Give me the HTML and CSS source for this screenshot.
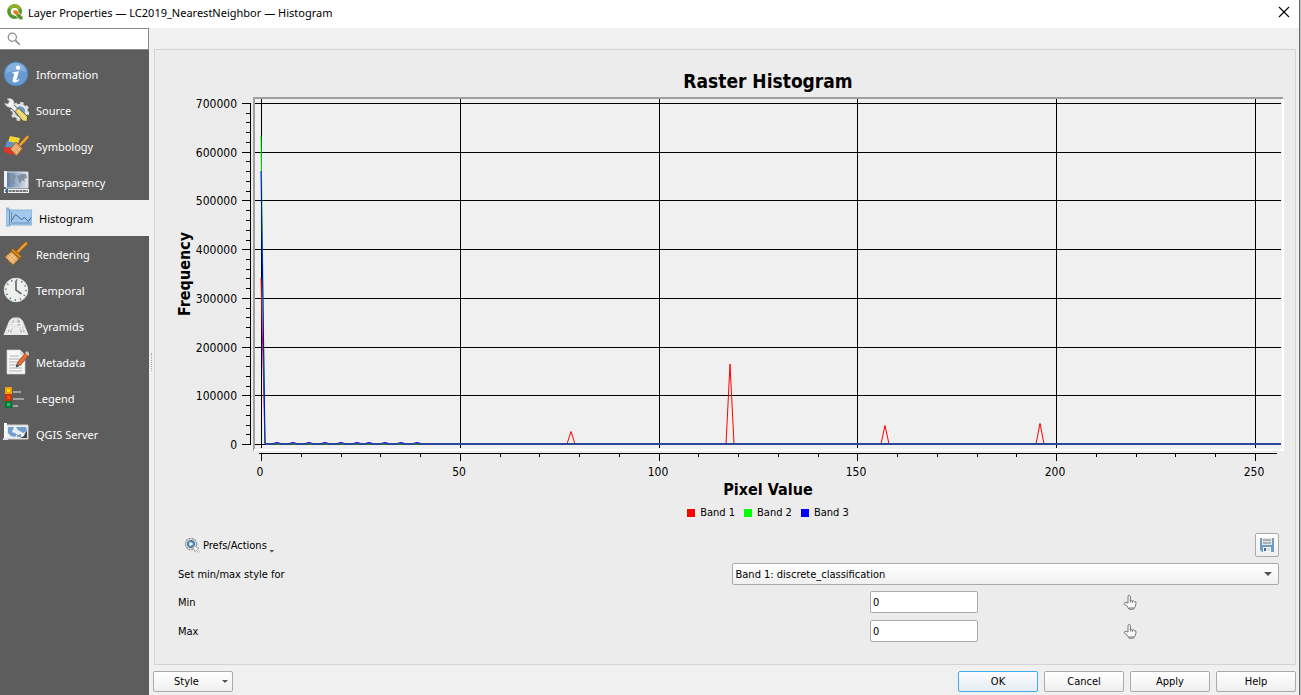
FILE: index.html
```html
<!DOCTYPE html>
<html lang="en">
<head>
<meta charset="utf-8">
<title>Layer Properties — LC2019_NearestNeighbor — Histogram</title>
<link rel="stylesheet" href="styles.css">
</head>
<body>
<div class="dialog">
  <header class="titlebar">
    <svg class="logo" viewBox="0 0 16 16" aria-hidden="true">
      <circle cx="7.6" cy="7.6" r="5.6" fill="none" stroke="#589632" stroke-width="3.6"/>
      <path d="M2.6 5A5.6 5.6 0 0 1 12.6 5" fill="none" stroke="#93b023" stroke-width="3.4"/>
      <path d="M8 8h3.4l4.3 4.4v3.3h-3.2L8 11.3z" fill="#fff"/>
      <path d="M9.4 9.4h2.6l3.6 3.4v2.8h-2.8L9.4 12z" fill="#589632"/>
      <path d="M6.3 6.3h3.2l1.8 1.8v2.6H8.6L6.3 8.8z" fill="#ee7913"/>
    </svg>
    <h1 class="caption">Layer Properties — LC2019_NearestNeighbor — Histogram</h1>
    <button class="close" type="button" aria-label="Close">
      <svg viewBox="0 0 12 12"><path d="M1 1l10 10M11 1L1 11" stroke="#000" stroke-width="1.1"/></svg>
    </button>
  </header>

  <div class="body">
    <aside class="sidebar">
      <label class="search">
        <svg viewBox="0 0 14 14" aria-hidden="true"><circle cx="5.3" cy="5.3" r="4.1" fill="none" stroke="#8a8a8a" stroke-width="1.2"/><path d="M8.4 8.4l4.4 4.4" stroke="#8a8a8a" stroke-width="1.5"/></svg>
        <input type="text" aria-label="Search">
      </label>
      <nav class="pages">
        <a href="#information"><svg viewBox="0 0 26 26"><circle cx="13" cy="13" r="12" fill="#6a9bd0" stroke="#4a79b0"/><path d="M3 12a10 10 0 0 1 20-1q-9-3-20 1z" fill="#86afdb"/><circle cx="15" cy="6.6" r="2.2" fill="#fff"/><path d="M9.500 11.200l6.500-1-2.700 9q.8.4 2.800-1.200l.4.9q-3 2.900-5.300 2.600-2.200-.5-1.400-3.500l1.500-5.400-2-.4z" fill="#fff"/></svg><span>Information</span></a>
        <a href="#source"><svg viewBox="0 0 26 26"><circle cx="17" cy="14.500" r="6.500" fill="#6a9bd0" stroke="#e4e4e4" stroke-width="2.500"/><circle cx="17" cy="14.500" r="8.400" fill="none" stroke="#e4e4e4" stroke-width="2.200" stroke-dasharray="3.300 3.297"/><path d="M8 8l9 9" stroke="#6a6a6a" stroke-width="5"/><path d="M1.500 6.500Q4 11 8.500 10.500 12.500 8 10.500 3.500 8 .5 4 2l2.500 2L5 7z" fill="#f1f1f1" stroke="#bbb" stroke-width=".5"/><path d="M8 8l7 7" stroke="#f1f1f1" stroke-width="3.200"/><path d="M12 14.500l3.500-3.500 9 8.500-.3 5-4.500-.5z" fill="#efd66c" stroke="#55502e" stroke-width=".9"/><path d="M15 13.500l8 8" stroke="#fff0a0"/></svg><span>Source</span></a>
        <a href="#symbology"><svg viewBox="0 0 26 26"><path d="M7 3l10 2-2 6-10-2z" fill="#f3d52f"/><path d="M4 8l9 2-2 5-9-1z" fill="#5c93cf"/><path d="M1 14l9 1 5 7-9-1-5-2z" fill="#e23328"/><path d="M17 12l7.500-8" stroke="#a86516" stroke-width="3.600" stroke-linecap="round"/><path d="M17 12l7.500-8" stroke="#eca544" stroke-width="2" stroke-linecap="round"/><path d="M13 9l6.500 6.500-6 7.500-6.500-7z" fill="#dfa162" stroke="#9d6223"/><path d="M11.500 12l5.500 6M9.500 14l5.500 6M14 12l-4 6M17 15l-4 5" stroke="#f2c795" stroke-width=".7"/></svg><span>Symbology</span></a>
        <a href="#transparency"><svg viewBox="0 0 26 26"><defs><linearGradient id="fade"><stop stop-color="#5779ae"/><stop offset="1" stop-color="#e4e7ea"/></linearGradient></defs><path d="M3 3h22v16H3z" fill="url(#fade)" stroke="#d6dbe2"/><path d="M6 8l5-3 2 3-2 3 1 4-2 1-2-4zM14 7l4-2h5l1 4-3 1 1 3-3-2-2 4-2-5z" fill="#8391a1"/><path d="M1 2h3v16H1z" fill="#f2f2f2"/><path d="M1 20h25v4H1z" fill="#f1f1f1"/><path d="M2 22h23" stroke="#4c4c4c" stroke-width="1.600" stroke-dasharray="3 .6"/><path d="M3 20h2v4H3z" fill="#3465a4"/></svg><span>Transparency</span></a>
        <a href="#histogram" class="current" aria-current="page"><svg viewBox="0 0 26 26"><path d="M1 5h25v15H4v1H0V3h3v2z" fill="#a3c8ea" stroke="#7ca9d4" stroke-width=".8"/><path d="M3.500 5v15M5.500 7v11h19" fill="none" stroke="#6b8fb5"/><path d="M5.500 15.500l4-6 6 5 3-2 4 4 2.500-4" fill="none" stroke="#3567a5"/></svg><span>Histogram</span></a>
        <a href="#rendering"><svg viewBox="0 0 26 26"><path d="M14.500 11l8.500-8.500" stroke="#9a5d12" stroke-width="4" stroke-linecap="round"/><path d="M14.500 11l8.500-8.500" stroke="#eba23c" stroke-width="2.200" stroke-linecap="round"/><path d="M10 7.500l8.500 8-1.500 2L8 9.500z" fill="#d98a21" stroke="#9a5d12"/><path d="M8.500 10.500l7.500 7-6 6.500L2 16z" fill="#e3ab65" stroke="#a36622"/><path d="M6.500 12l7.500 8M4.500 14l7 8M13 15l-6.500 6M11 13l-6 6" stroke="#f5d3a0" stroke-width=".8"/></svg><span>Rendering</span></a>
        <a href="#temporal"><svg viewBox="0 0 26 26"><circle cx="13" cy="13" r="11.800" fill="#efefec" stroke="#e2e2df"/><circle cx="13" cy="13" r="10" fill="none" stroke="#4e79ad" stroke-width="1.800" stroke-dasharray="1.200 4.036"/><path d="M13 3.500V13l5.500 4" fill="none" stroke="#6b7075" stroke-width="1.800"/></svg><span>Temporal</span></a>
        <a href="#pyramids"><svg viewBox="0 0 26 26"><path d="M9 5q4-1.500 8 0l3 3 5.500 14H.5L6 8z" fill="#e8e8e8"/><path d="M8 8l3-1-1 4-3 2zM14 6l4 2v4l-3 1zM16 15l4-1 2 5-4 1zM5 16l5-1-2 5-3-1z" fill="#bababa"/><path d="M7 10.500h12M4 16h18M9 6L6 22M17 6l3 16" stroke="#fafafa" stroke-width=".9"/><path d="M9 5q4-1.500 8 0" fill="none" stroke="#999"/></svg><span>Pyramids</span></a>
        <a href="#metadata"><svg viewBox="0 0 26 26"><path d="M4 1h13l5 5v19H4z" fill="#f8f8f8" stroke="#ccc" stroke-width=".7"/><path d="M17 1v5h5" fill="#ddd"/><path d="M7 7h9M6 10h13M6 13h11M6 16h10M6 19h13M6 22h13" stroke="#aeb0b2"/><path d="M15.500 15.500l9-11" stroke="#a9441d" stroke-width="4.600"/><path d="M16 15l8-10" stroke="#e6743a" stroke-width="3"/><path d="M22 4l4 3 1.500-1.500L24 2z" fill="#c9c9c9"/><path d="M13.500 14.500l-.7 4 4-1.500z" fill="#484848"/></svg><span>Metadata</span></a>
        <a href="#legend"><svg viewBox="0 0 26 26"><path d="M3 3h5v5H3z" fill="#ffdd0b" stroke="#f39c12" stroke-width="2"/><path d="M3 10h5v5H3z" fill="#ff4b0a" stroke="#c23a0a" stroke-width="2"/><path d="M3 17h5v5H3z" fill="#15c765" stroke="#07773c" stroke-width="2"/><path d="M10 7h8M10 14h11M10 21h5" stroke="#a2a2a2" stroke-width="2"/></svg><span>Legend</span></a>
        <a href="#server"><svg viewBox="0 0 26 26"><path d="M3 4h22v14H3z" fill="#eceeee" stroke="#cfd1d2"/><path d="M1 2h3v17H1z" fill="#f8f8f8"/><path d="M0 17h5v2H0z" fill="#e1e1e1"/><path d="M5 6h6l-2 5 5 2-2 3-4-1-3-3zM13 6h10l1 4-4 2-5-3zM14 14l4-1v3h-4z" fill="#6f9fcf"/><path d="M24 10v7h-7l4-2 1-3z" fill="#444"/></svg><span>QGIS Server</span></a>
      </nav>
    </aside>
    <div class="splitter"></div>

    <main class="main">
      <section class="panel">
        <figure class="chart">
          <h2 class="chart-title">Raster Histogram</h2>
          <svg class="plot" viewBox="155 94 1140 386" role="img" aria-label="Frequency by pixel value">
            <path class="plot-bg" d="M255 99h1027v350H255z"/>
            <path class="edge-dark" d="M253 97h1030v2H255v352h-2z"/>
            <path class="edge-light" d="M1282 99h2v352H254v-2h1028z"/>
            <path class="rule" d="M255 103.500h1026M255 152.500h1026M255 200.500h1026M255 249.500h1026M255 298.500h1026M255 347.500h1026M255 395.500h1026M255 444.500h1026"/>
            <path class="rule" d="M261.500 99v349M460.500 99v349M659.500 99v349M857.500 99v349M1056.500 99v349M1255.500 99v349"/>
            <path class="rule" d="M250.500 103v342M242 103.500h8M242 152.500h8M242 200.500h8M242 249.500h8M242 298.500h8M242 347.500h8M242 395.500h8M242 444.500h8"/>
            <path class="rule" d="M246 434.500h4M246 425.500h4M246 415.500h4M246 405.500h4M246 386.500h4M246 376.500h4M246 366.500h4M246 356.500h4M246 337.500h4M246 327.500h4M246 317.500h4M246 308.500h4M246 288.500h4M246 278.500h4M246 269.500h4M246 259.500h4M246 240.500h4M246 230.500h4M246 220.500h4M246 210.500h4M246 191.500h4M246 181.500h4M246 171.500h4M246 161.500h4M246 142.500h4M246 132.500h4M246 122.500h4M246 113.500h4"/>
            <path class="rule" d="M259 453.500h1018M261.500 453v8M460.500 453v8M659.500 453v8M857.500 453v8M1056.500 453v8M1255.500 453v8"/>
            <path class="rule" d="M301.500 453v4M341.500 453v4M380.500 453v4M420.500 453v4M500.500 453v4M539.500 453v4M579.500 453v4M619.500 453v4M698.500 453v4M738.500 453v4M778.500 453v4M818.500 453v4M897.500 453v4M937.500 453v4M977.500 453v4M1016.500 453v4M1096.500 453v4M1136.500 453v4M1175.500 453v4M1215.500 453v4"/>
            <path class="series band1" d="M261 278L265 444H567L571 431.500 575 444H726L730 364 734 444H881L885 425.500 889 444H1036L1040 423.500 1044 444H1281"/>
            <path class="series band2" d="M261 136L265 444H1281"/>
            <path class="series band3" d="M261 171L265 443.500h8l4-1 4 1h8l4-1 4 1h8l4-1 4 1h8l4-1 4 1h8l4-1 4 1h8l4-1 4 1h4l4-1 4 1h8l4-1 4 1h8l4-1 4 1h8l4-1 4 1H1281"/>
            <path class="base" d="M265 444h1016"/>
            <path class="bump" d="M275 444.500h5M291 444.500h5M307 444.500h5M323 444.500h5M339 444.500h5M354 444.500h5M366 444.500h5M382 444.500h5M398 444.500h5M414 444.500h5"/>
            <g class="tick end">
              <text x="237" y="108">700000</text><text x="237" y="157">600000</text><text x="237" y="205">500000</text><text x="237" y="254">400000</text><text x="237" y="303">300000</text><text x="237" y="352">200000</text><text x="237" y="400">100000</text><text x="237" y="449">0</text>
            </g>
            <g class="tick mid">
              <text x="260" y="476">0</text><text x="459" y="476">50</text><text x="658" y="476">100</text><text x="856" y="476">150</text><text x="1055" y="476">200</text><text x="1254" y="476">250</text>
            </g>
            <text class="axis mid" transform="translate(190 274) rotate(-90)">Frequency</text>
          </svg>
          <div class="x-title">Pixel Value</div>
          <ul class="legend">
            <li><i class="swatch red"></i>Band 1</li>
            <li><i class="swatch green"></i>Band 2</li>
            <li><i class="swatch blue"></i>Band 3</li>
          </ul>
        </figure>

        <form class="controls">
          <div class="tools">
            <button class="prefs" type="button">
              <svg viewBox="0 0 16 16" aria-hidden="true"><circle cx="7" cy="7" r="5.600" fill="#e2e2e2" stroke="#9a9a9a" stroke-width="1.400" stroke-dasharray="2.200 .732"/><circle cx="7" cy="7" r="3.600" fill="#5588bb" stroke="#4474a7"/><path d="M5.500 4.800L9.500 7l-4 2.200z" fill="#fff"/><path d="M9 9l6 2-2 1 2.500 2.500-1 1L12 13l-1 2z" fill="#fff" stroke="#999" stroke-width=".7"/></svg>
              <span>Prefs/Actions</span><i class="arrow low"></i>
            </button>
            <button class="save" type="button" aria-label="Save as image">
              <svg viewBox="0 0 16 16"><path d="M1 1h14v14H3l-2-2z" fill="#6f9bc8"/><path d="M3 1h10v7H3z" fill="#e6e6e6"/><path d="M4 3h8M4 6h8" stroke="#b1b1b1" stroke-width="2"/><path d="M4 10h8v5H4z" fill="#f5f5f5"/><path d="M5 11h2v3H5z" fill="#416b97"/><path d="M8 11h3v3H8z" fill="#ddd"/></svg>
            </button>
          </div>
          <div class="row style-row">
            <label for="band">Set min/max style for</label>
            <div class="select-box">
              <select id="band"><option>Band 1: discrete_classification</option></select><i class="arrow"></i>
            </div>
          </div>
          <div class="row range-row">
            <label for="min">Min</label>
            <input id="min" type="text" value="0">
            <button class="pick" type="button" aria-label="Pick minimum on graph"><svg viewBox="0 0 14 16"><path d="M5 9V2.200Q6.200.3 7.400 2.200V6.500Q8.500 5.500 9.300 7 10.500 6.200 11.300 7.600 13.200 7 13 9.500L12.300 12.500 10.500 15.200H6L4 12 .8 9.500Q1.500 7.500 5 9z" fill="#fafafa" stroke="#777"/><path d="M7.400 6v2.500M9.300 7v2M6 14h5" stroke="#777"/></svg></button>
          </div>
          <div class="row range-row">
            <label for="max">Max</label>
            <input id="max" type="text" value="0">
            <button class="pick" type="button" aria-label="Pick maximum on graph"><svg viewBox="0 0 14 16"><path d="M5 9V2.200Q6.200.3 7.400 2.200V6.500Q8.500 5.500 9.300 7 10.500 6.200 11.300 7.600 13.200 7 13 9.500L12.300 12.500 10.500 15.200H6L4 12 .8 9.500Q1.500 7.500 5 9z" fill="#fafafa" stroke="#777"/><path d="M7.400 6v2.500M9.300 7v2M6 14h5" stroke="#777"/></svg></button>
          </div>
        </form>
      </section>

      <footer class="buttons">
        <button class="btn menu" type="button">Style<i class="arrow"></i></button>
        <button class="btn primary" type="button">OK</button>
        <button class="btn" type="button">Cancel</button>
        <button class="btn" type="button">Apply</button>
        <button class="btn" type="button">Help</button>
      </footer>
    </main>
  </div>
</div>
</body>
</html>
```
FILE: styles.css
```css
* { box-sizing: border-box; }

body {
  margin: 0;
  min-height: 100vh;
  display: flex;
  background: #c4c4c4;
  color: #000;
  font: 11px/14px "DejaVu Sans Condensed", "DejaVu Sans", sans-serif;
}

button, input, select { font: inherit; color: inherit; }

.dialog {
  flex: 1;
  display: flex;
  flex-direction: column;
  background: #f0f0f0;
  border-right: 1px solid #666;
  margin-right: 1px;
}

.titlebar {
  display: flex;
  align-items: center;
  height: 28px;
  padding: 0 9px 4px 7px;
  background: #fff;
}
.logo { width: 16px; height: 16px; margin-right: 5px; }
.caption {
  flex: 1;
  margin: 0;
  padding-top: 2px;
  font: 400 11px/16px "Noto Sans", "Open Sans", sans-serif;
}
.close { padding: 0; border: 0; background: none; display: flex; }
.close svg { width: 12px; height: 12px; }

.body { flex: 1; display: flex; }

.sidebar { width: 149px; background: #5d5d5d; }
.search {
  display: flex;
  align-items: center;
  height: 22px;
  padding-left: 7px;
  background: #fff;
  border: 1px solid #888;
  border-left: 0;
}
.search svg { width: 14px; height: 14px; }
.search input { flex: 1; min-width: 0; border: 0; background: none; outline: 0; }

.pages { padding-top: 6px; }
.pages a {
  display: flex;
  align-items: center;
  gap: 7px;
  height: 36px;
  padding-left: 3px;
  color: #fff;
  text-decoration: none;
  font: 11px/16px "Noto Sans", "Open Sans", sans-serif;
}
.pages span { padding-top: 2px; }
.pages svg { width: 26px; height: 26px; }
.pages .current { padding-left: 6px; background: #f0f0f0; color: #000; }

.splitter {
  width: 4px;
  display: flex;
  align-items: center;
  justify-content: center;
}
.splitter::before { content: ""; height: 18px; border-left: 1px dotted #aaa; }

.main { flex: 1; display: flex; flex-direction: column; padding: 21px 3px 3px 0; }
.panel {
  flex: 1;
  margin-left: 1px;
  background: #ececec;
  border: 1px solid #d4d4d4;
}

.chart { margin: 0; padding-top: 19px; }
.chart-title {
  margin: 0 0 1px 86px;
  text-align: center;
  font: bold 19px/24px "DejaVu Sans Condensed", sans-serif;
}
.plot { display: block; width: 100%; }
.plot-bg { fill: #f0f0f0; }
.edge-dark { fill: #a0a0a0; }
.edge-light { fill: #fff; }
.rule { fill: none; stroke: #000; shape-rendering: crispEdges; }
.series { fill: none; stroke-width: 1; }
.band1 { stroke: #f00; }
.band2 { stroke: #0e0; }
.band3 { stroke: #00f; }
.base { stroke: #2b479b; stroke-width: 2; shape-rendering: crispEdges; }
.bump { stroke: #2f7a1a; shape-rendering: crispEdges; }
.tick { font-size: 12px; }
.end { text-anchor: end; }
.mid { text-anchor: middle; }
.axis, .x-title { font: bold 16px/20px "DejaVu Sans Condensed", sans-serif; }
.x-title { margin-left: 86px; text-align: center; }
.legend {
  display: flex;
  justify-content: center;
  gap: 9px;
  margin: 6px 0 0 86px;
  padding: 0;
  list-style: none;
}
.legend li { display: flex; align-items: center; gap: 5px; }
.swatch { width: 8px; height: 8px; }
.red { background: #f00; }
.green { background: #0f0; }
.blue { background: #00f; }

.controls { padding: 13px 16px 0 23px; }
.controls label, .prefs span { padding-top: 2px; }
.tools { display: flex; justify-content: space-between; align-items: center; height: 24px; }
.prefs {
  display: flex;
  align-items: center;
  gap: 3px;
  padding: 0 0 0 6px;
  border: 0;
  background: none;
}
.prefs svg { width: 16px; height: 16px; }
.arrow {
  width: 8px;
  height: 4px;
  background: #555;
  clip-path: polygon(0 0, 100% 0, 50% 100%);
}
.arrow.low { width: 6px; height: 3px; margin: 12px 0 0 -1px; }
.save {
  display: flex;
  align-items: center;
  justify-content: center;
  width: 24px;
  height: 24px;
  padding: 0;
  border: 1px solid #aaa;
  border-radius: 2px;
  background: linear-gradient(#fff, #f0f0f0);
}
.save svg { width: 16px; height: 16px; }

.row { display: grid; align-items: center; height: 22px; margin-top: 7px; }
.style-row { grid-template-columns: 1fr 1fr; gap: 6px; margin: 6px 0 6px; }
.range-row { grid-template-columns: 692fr 253fr 156fr; justify-items: start; }
.style-row + .range-row { margin-top: 0; }
.select-box { position: relative; height: 22px; }
.select-box select {
  width: 100%;
  height: 22px;
  padding: 1px 3px 0;
  appearance: none;
  border: 1px solid #aaa;
  border-radius: 2px;
  background: linear-gradient(#fff, #f0f0f0);
}
.select-box .arrow { position: absolute; right: 7px; top: 9px; pointer-events: none; }
.range-row input {
  width: 108px;
  height: 22px;
  padding: 1px 2px 0;
  border: 1px solid #aaa;
  border-radius: 2px;
  background: #fff;
}
.pick { display: flex; padding: 0; border: 0; background: none; }
.pick svg { width: 14px; height: 16px; }

.buttons { display: flex; gap: 6px; padding-top: 6px; }
.btn {
  width: 80px;
  height: 21px;
  padding: 1px 0 0;
  border: 1px solid #aaa;
  border-radius: 2px;
  background: linear-gradient(#fff, #f0f0f0);
}
.primary { border-color: #3daee9; background: linear-gradient(#fcfdfe, #e4ebf2); }
.menu {
  display: flex;
  align-items: center;
  justify-content: space-between;
  margin-right: auto;
  padding: 0 4px 0 20px;
}
.menu .arrow { width: 6px; height: 3px; }
```
